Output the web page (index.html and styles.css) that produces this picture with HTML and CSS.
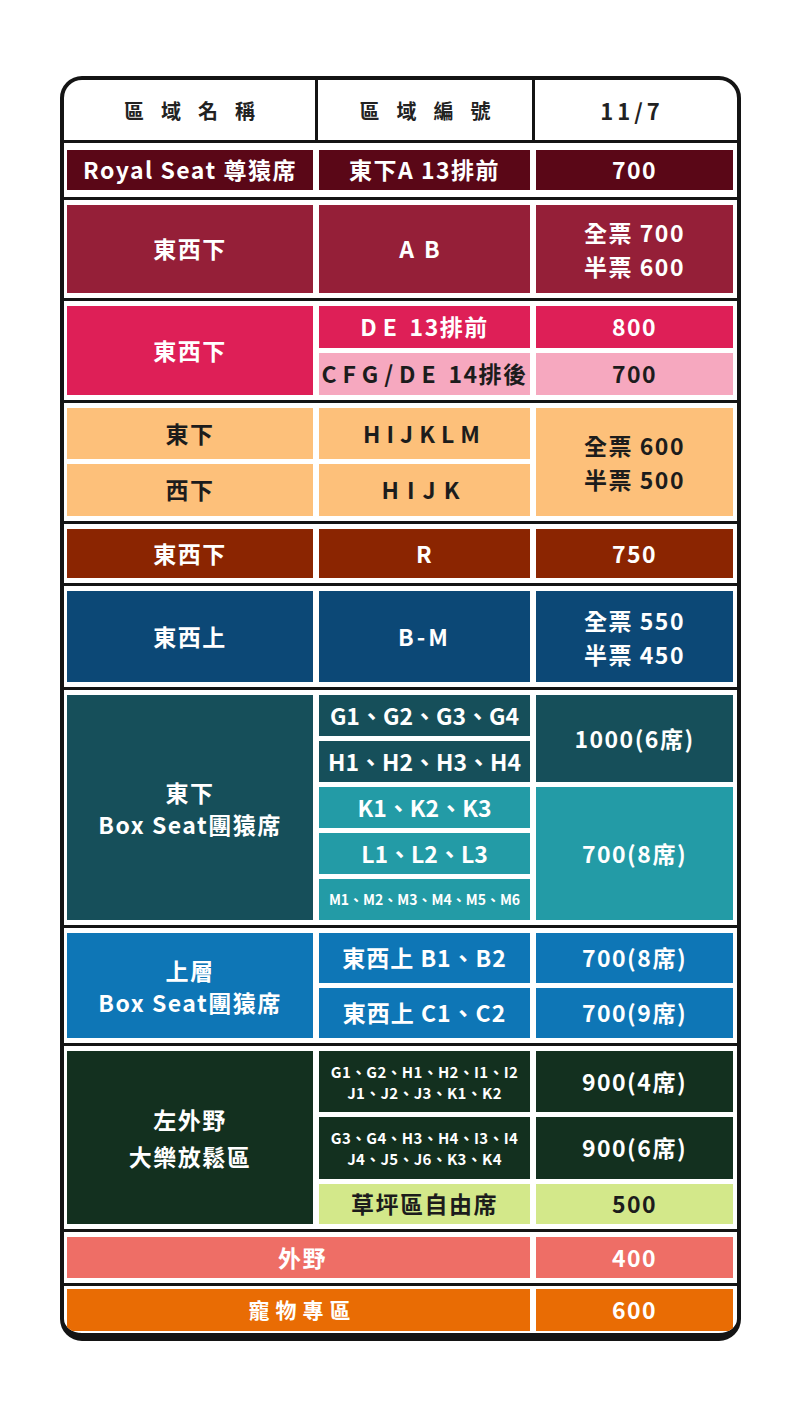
FILE: index.html
```html
<!DOCTYPE html>
<html lang="zh-Hant">
<head>
<meta charset="utf-8">
<title>票價表</title>
<link rel="stylesheet" href="styles.css">
</head>
<body>
<div class="frame">
  <div class="head">
    <div class="hc"><span class="hz">區域名稱</span></div>
    <div class="hc sep"><span class="hz">區域編號</span></div>
    <div class="hc sep"><span class="hd">11/7</span></div>
  </div>

  <div class="grp first royal">
    <div class="c">Royal Seat 尊猿席</div>
    <div class="c">東下A 13排前</div>
    <div class="c">700</div>
  </div>

  <div class="grp ab">
    <div class="c">東西下</div>
    <div class="c"><span class="w10">AB</span></div>
    <div class="c ml">全票 700<br>半票 600</div>
  </div>

  <div class="grp de">
    <div class="c span2">東西下</div>
    <div class="c"><span class="w6">DE</span>&nbsp;13排前</div>
    <div class="c">800</div>
    <div class="c light"><span class="w6">CFG/DE</span>&nbsp;14排後</div>
    <div class="c light">700</div>
  </div>

  <div class="grp peach">
    <div class="c">東下</div>
    <div class="c"><span class="w6">HIJKLM</span></div>
    <div class="c span2 ml">全票 600<br>半票 500</div>
    <div class="c">西下</div>
    <div class="c"><span class="w8">HIJK</span></div>
  </div>

  <div class="grp rr">
    <div class="c">東西下</div>
    <div class="c">R</div>
    <div class="c">750</div>
  </div>

  <div class="grp navy">
    <div class="c">東西上</div>
    <div class="c"><span class="w3">B-M</span></div>
    <div class="c ml">全票 550<br>半票 450</div>
  </div>

  <div class="grp box">
    <div class="c span5 dark ml2">東下<br>Box Seat團猿席</div>
    <div class="c dark list">G1、G2、G3、G4</div>
    <div class="c dark span2">1000(6席)</div>
    <div class="c dark list">H1、H2、H3、H4</div>
    <div class="c teal list">K1、K2、K3</div>
    <div class="c teal span3">700(8席)</div>
    <div class="c teal list">L1、L2、L3</div>
    <div class="c teal small">M1、M2、M3、M4、M5、M6</div>
  </div>

  <div class="grp upper">
    <div class="c span2 ml3">上層<br>Box Seat團猿席</div>
    <div class="c list1">東西上 B1、B2</div>
    <div class="c">700(8席)</div>
    <div class="c list1">東西上 C1、C2</div>
    <div class="c">700(9席)</div>
  </div>

  <div class="grp left">
    <div class="c span3 ml4">左外野<br>大樂放鬆區</div>
    <div class="c tiny">G1、G2、H1、H2、I1、I2<br>J1、J2、J3、K1、K2</div>
    <div class="c">900(4席)</div>
    <div class="c tiny">G3、G4、H3、H4、I3、I4<br>J4、J5、J6、K3、K4</div>
    <div class="c">900(6席)</div>
    <div class="c grass">草坪區自由席</div>
    <div class="c grass">500</div>
  </div>

  <div class="grp outfield">
    <div class="c wide2">外野</div>
    <div class="c">400</div>
  </div>

  <div class="grp pet">
    <div class="c wide2"><span class="w6">寵物專區</span></div>
    <div class="c">600</div>
  </div>
</div>
</body>
</html>
```

FILE: styles.css
```css
html, body {
  margin: 0;
  padding: 0;
  background: #ffffff;
}

body {
  font-family: "Noto Sans CJK TC", "Noto Sans", sans-serif;
  font-weight: 700;
}

.frame {
  box-sizing: border-box;
  width: 681px;
  margin: 76px 0 0 60px;
  border: 4px solid #141414;
  border-bottom-width: 8px;
  border-radius: 22px;
  overflow: hidden;
  background: #ffffff;
}

.head {
  display: grid;
  grid-template-columns: 251px 217px 1fr;
  height: 60px;
  border-bottom: 3px solid #141414;
}

.hc {
  display: flex;
  align-items: center;
  justify-content: center;
  color: #222222;
}

.hc.sep {
  border-left: 3px solid #141414;
}

.hz {
  font-size: 20px;
  letter-spacing: 17px;
  margin-right: -17px;
}

.hd {
  font-size: 22px;
  letter-spacing: 4px;
  margin-right: 8px;
}

.grp {
  display: grid;
  grid-template-columns: 246px 211px 197px;
  gap: 5px 6px;
  padding: 5px 4px 5px 3px;
  border-top: 3px solid #141414;
}

.grp.first {
  border-top: none;
  padding-top: 7px;
  padding-bottom: 7px;
}

.c {
  display: flex;
  align-items: center;
  justify-content: center;
  text-align: center;
  color: #ffffff;
  font-size: 23px;
  letter-spacing: 1.5px;
  line-height: 1.2;
  white-space: nowrap;
}

.span2 { grid-row: span 2; }
.span3 { grid-row: span 3; }
.span5 { grid-row: span 5; }
.wide2 { grid-column: span 2; padding-left: 8px; }

.ml { line-height: 34px; }
.ml2 { line-height: 32px; }
.ml3 { line-height: 32px; }
.ml4 { line-height: 37px; }

.list { letter-spacing: 0; }
.list1 { letter-spacing: 1px; }

.w3 { letter-spacing: 3px; }
.w6 { letter-spacing: 6px; }
.w8 { letter-spacing: 8px; }
.w10 { letter-spacing: 10px; }

/* groups */
.royal { grid-template-rows: 40px; }
.royal .c { background: #5a0717; }

.ab { grid-template-rows: 88px; }
.ab .c { background: #951f38; }

.de { grid-template-rows: 42px 42px; }
.de .c { background: #de1f57; }
.de .c.light { background: #f6a8bf; color: #1c1c1c; }

.peach { grid-template-rows: 51px 52px; }
.peach .c { background: #fdc07a; color: #1c1c1c; }

.rr { grid-template-rows: 49px; }
.rr .c { background: #8b2501; }

.navy { grid-template-rows: 91px; }
.navy .c { background: #0c4876; }

.box { grid-template-rows: repeat(5, 41px); }
.box .c.dark { background: #164f5a; }
.box .c.teal { background: #239ba6; }
.box .c.small { font-size: 14px; letter-spacing: 0; }

.upper { grid-template-rows: 50px 50px; }
.upper .c { background: #0e76b6; }

.left { grid-template-rows: 61px 62px 40px; }
.left .c { background: #13301f; }
.left .c.tiny { font-size: 15px; letter-spacing: 0.3px; line-height: 21px; }
.left .c.grass { background: #d3e88a; color: #1c1c1c; }

.outfield { grid-template-rows: 41px; }
.outfield .c { background: #ee6e66; }

.pet {
  grid-template-rows: 42px;
  padding-top: 3px;
  padding-bottom: 2px;
}
.pet .c { background: #e96c04; }
.pet .c.wide2 { font-size: 21px; }
```
